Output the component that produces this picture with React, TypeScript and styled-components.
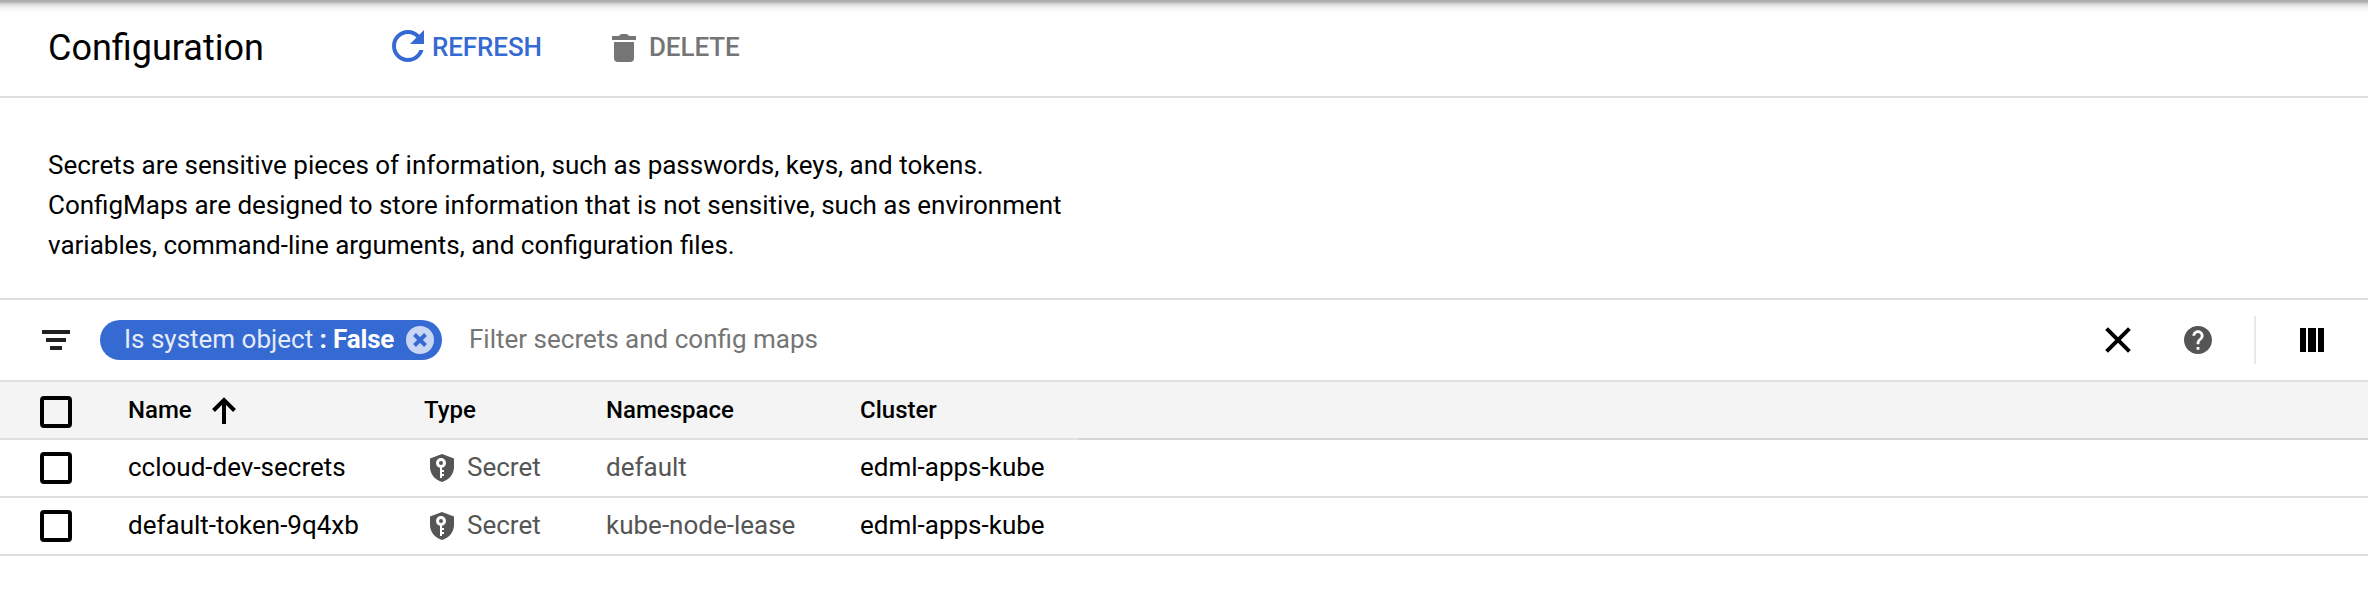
import React from "react";
import styled, { createGlobalStyle } from "styled-components";

const Global = createGlobalStyle`
  * { box-sizing: border-box; }
  body { margin: 0; background: #fff; }
`;

const Page = styled.div`
  width: 100%;
  min-height: 598px;
  background: #fff;
  color: #000;
  font-family: Roboto, "Liberation Sans", sans-serif;
  font-size: 26px;
`;

const Header = styled.header`
  display: flex;
  align-items: center;
  height: 98px;
  padding: 0 48px 4px;
  border-bottom: 2px solid #e0e0e0;
  background: linear-gradient(#a6a6a6 0, #b4b4b4 2px, #d8d8d8 4px, #efefef 7px, #fafafa 10px, #fff 14px);
`;

const Title = styled.h1`
  width: 344px;
  margin: 0;
  padding-top: 4px;
  font-size: 36px;
  font-weight: 400;
  line-height: 44px;
`;

const Action = styled.button<{ $color: string; $gap: number; $width?: number }>`
  display: flex;
  align-items: center;
  gap: ${(p) => p.$gap}px;
  width: ${(p) => (p.$width ? `${p.$width}px` : "auto")};
  margin: 0;
  padding: 0;
  border: 0;
  background: none;
  color: ${(p) => p.$color};
  font: 500 26px/32px Roboto, "Liberation Sans", sans-serif;
  letter-spacing: -0.1px;
`;

const ActionLabel = styled.span`
  padding-top: 2px;
`;

const Intro = styled.p`
  height: 200px;
  margin: 0;
  padding: 47px 48px 0;
  line-height: 40px;
`;

const FilterBar = styled.div`
  display: flex;
  align-items: center;
  height: 84px;
  padding: 0 44px 0 42px;
  border-top: 2px solid #e0e0e0;
  border-bottom: 2px solid #e0e0e0;
`;

const Chip = styled.div`
  display: flex;
  align-items: center;
  width: 342px;
  height: 40px;
  margin-left: 30px;
  padding: 0 8px 0 24px;
  border-radius: 20px;
  background: #366ad3;
  color: #fff;
  white-space: pre;
`;

const ChipKey = styled.span`
  padding-bottom: 2px;
  opacity: 0.87;
`;

const ChipValue = styled.span`
  flex: 1;
  padding-bottom: 2px;
  font-weight: 700;
  letter-spacing: -0.15px;
`;

const Placeholder = styled.span`
  flex: 1;
  margin-left: 27px;
  padding-bottom: 2px;
  color: #757575;
`;

const Tools = styled.div`
  display: flex;
  align-items: center;
`;

const Divider = styled.span`
  width: 2px;
  height: 48px;
  margin: 0 44px 0 42px;
  background: #e8e8e8;
`;

const Row = styled.div<{ $head?: boolean }>`
  display: grid;
  grid-template-columns: 88px 296px 182px 254px 218px 1fr;
  align-items: center;
  height: 58px;
  padding-left: 40px;
  border-bottom: 2px solid #e0e0e0;
  background: ${(p) => (p.$head ? "#f4f4f4" : "#fff")};
  font-size: ${(p) => (p.$head ? 24 : 26)}px;
  font-weight: ${(p) => (p.$head ? 500 : 400)};
`;

const Box = styled.span<{ $drop?: number }>`
  width: 32px;
  height: 32px;
  margin-top: ${(p) => p.$drop ?? 0}px;
  border: 4px solid #000;
  border-radius: 4px;
`;

const Cell = styled.span<{ $muted?: boolean }>`
  display: flex;
  align-items: center;
  height: 32px;
  margin-top: -2px;
  color: ${(p) => (p.$muted ? "#555" : "#000")};
`;

const HeadCell = styled(Cell)`
  margin-top: 0;
`;

const HeadFill = styled.span`
  align-self: stretch;
  margin-bottom: -2px;
  border-bottom: 2px solid #d6d6d6;
`;

const RefreshIcon = () => (
  <svg width="32" height="32" viewBox="4 4 16 16" fill="currentColor">
    <path d="M17.65 6.35C16.2 4.9 14.21 4 12 4c-4.42 0-7.99 3.58-7.99 8s3.57 8 7.99 8c3.73 0 6.84-2.55 7.73-6h-2.08c-.82 2.33-3.04 4-5.65 4-3.31 0-6-2.69-6-6s2.69-6 6-6c1.66 0 3.14.69 4.22 1.78L13 11h7V4l-2.35 2.35z" />
  </svg>
);

const TrashSvg = styled.svg`
  margin-top: 4px;
`;

const TrashIcon = () => (
  <TrashSvg width="24" height="28" viewBox="0 0 24 28" fill="currentColor">
    <path d="M0 2h7q1-2 3-2h4q2 0 3 2h7v4H0zM2 8h20v16q0 4-4 4H6q-4 0-4-4z" />
  </TrashSvg>
);

const FilterIcon = () => (
  <svg width="28" height="20" viewBox="0 0 28 20" fill="#212121">
    <path d="M0 0h28v4H0zM4 8h20v4H4zM8 16h12v4H8z" />
  </svg>
);

const ChipCloseIcon = () => (
  <svg width="28" height="28" viewBox="0 0 28 28">
    <circle cx="14" cy="14" r="14" fill="#c8d6f3" />
    <path d="M8.5 8.5l11 11M19.5 8.5l-11 11" stroke="#366ad3" strokeWidth="4" />
  </svg>
);

const CloseIcon = () => (
  <svg width="26" height="26" viewBox="0 0 26 26" stroke="#000" strokeWidth="4">
    <path d="M1.6 1.6l22.8 22.8M24.4 1.6L1.6 24.4" />
  </svg>
);

const HelpWrap = styled.span`
  display: flex;
  margin-left: 53px;
`;

const HelpIcon = () => (
  <svg width="28" height="28" viewBox="2 2 20 20" fill="#555">
    <path d="M12 2C6.48 2 2 6.48 2 12s4.48 10 10 10 10-4.48 10-10S17.52 2 12 2zm1 17h-2v-2h2v2zm2.07-7.75l-.9.92C13.45 12.9 13 13.5 13 15h-2v-.5c0-1.1.45-2.1 1.17-2.83l1.24-1.26c.37-.36.59-.86.59-1.41 0-1.1-.9-2-2-2s-2 .9-2 2H8c0-2.21 1.79-4 4-4s4 1.79 4 4c0 .88-.36 1.68-.93 2.25z" />
  </svg>
);

const ColumnsIcon = () => (
  <svg width="24" height="24" viewBox="0 0 24 24">
    <path d="M0 0h6v24H0zM8 0h8v24H8zM18 0h6v24h-6z" />
  </svg>
);

const SortIcon = styled.svg`
  margin: 1px 0 0 20px;
`;

const ShieldSvg = styled.svg`
  margin: 2px 13px 0 6px;
`;

const SecretIcon = () => (
  <ShieldSvg width="24" height="28" viewBox="0 0 24 28">
    <path d="M12 0l12 4.5V13c0 7-5 13-12 15C5 26 0 20 0 13V4.5z" fill="#555" />
    <circle cx="11" cy="9" r="3.5" fill="none" stroke="#fff" strokeWidth="3" />
    <path d="M10 13h2v3h2v2h-2v2h2v2h-2v2h-2z" fill="#fff" />
  </ShieldSvg>
);

const secrets = [
  { name: "ccloud-dev-secrets", namespace: "default", cluster: "edml-apps-kube" },
  { name: "default-token-9q4xb", namespace: "kube-node-lease", cluster: "edml-apps-kube" },
];

export default function App() {
  return (
    <Page>
      <Global />
      <Header>
        <Title>Configuration</Title>
        <Action $color="#366ad3" $gap={8} $width={220}>
          <RefreshIcon />
          <ActionLabel>REFRESH</ActionLabel>
        </Action>
        <Action $color="#757575" $gap={13}>
          <TrashIcon />
          <ActionLabel>DELETE</ActionLabel>
        </Action>
      </Header>
      <Intro>
        Secrets are sensitive pieces of information, such as passwords, keys, and tokens.
        <br />
        ConfigMaps are designed to store information that is not sensitive, such as environment
        <br />
        variables, command-line arguments, and configuration files.
      </Intro>
      <FilterBar>
        <FilterIcon />
        <Chip>
          <ChipKey>Is system object</ChipKey>
          <ChipValue> : False</ChipValue>
          <ChipCloseIcon />
        </Chip>
        <Placeholder>Filter secrets and config maps</Placeholder>
        <Tools>
          <CloseIcon />
          <HelpWrap>
            <HelpIcon />
          </HelpWrap>
          <Divider />
          <ColumnsIcon />
        </Tools>
      </FilterBar>
      <Row $head>
        <Box $drop={4} />
        <HeadCell>
          Name
          <SortIcon width="24" height="27" viewBox="0 0 24 27" fill="none" stroke="#000" strokeWidth="4">
            <path d="M12 27V3M1.5 13.5L12 3l10.5 10.5" />
          </SortIcon>
        </HeadCell>
        <HeadCell>Type</HeadCell>
        <HeadCell>Namespace</HeadCell>
        <HeadCell>Cluster</HeadCell>
        <HeadFill />
      </Row>
      {secrets.map((s) => (
        <Row key={s.name}>
          <Box />
          <Cell>{s.name}</Cell>
          <Cell $muted>
            <SecretIcon />
            Secret
          </Cell>
          <Cell $muted>{s.namespace}</Cell>
          <Cell>{s.cluster}</Cell>
        </Row>
      ))}
    </Page>
  );
}
